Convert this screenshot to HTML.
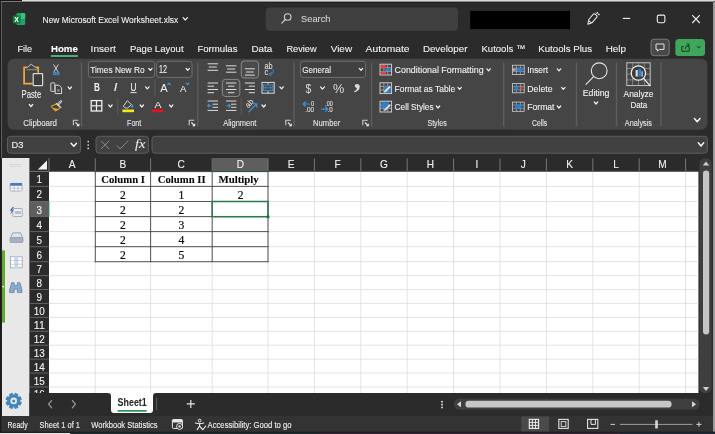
<!DOCTYPE html>
<html lang="en"><head><meta charset="utf-8"><title>New Microsoft Excel Worksheet.xlsx - Excel</title>
<style>
html,body{margin:0;padding:0;background:#2b2b2b;width:715px;height:434px;overflow:hidden}
svg text{white-space:pre}
</style></head><body>
<svg width="715" height="434" viewBox="0 0 715 434" style="display:block;will-change:transform">
<rect x="0" y="0" width="715" height="434" fill="#2b2b2b"/>
<rect x="0" y="0" width="22" height="1" fill="#151515"/>
<rect x="1" y="1" width="21" height="1" fill="#787878"/>
<rect x="22" y="0" width="693" height="1" fill="#d9d9d9"/>
<rect x="22" y="1" width="691" height="1" fill="#8c8c8c"/>
<rect x="22" y="2" width="691" height="1" fill="#202020"/>
<rect x="0" y="0" width="1" height="434" fill="#1a1a1a"/>
<rect x="1" y="2" width="1" height="156" fill="#6a6a6a" opacity="0.8"/>
<rect x="713" y="1.5" width="2" height="432" fill="#9a9a9a"/>
<rect x="0" y="431.6" width="715" height="1.4" fill="#1f1f1f"/>
<rect x="0" y="433" width="70" height="1" fill="#e8e8e8"/>
<rect x="70" y="433" width="250" height="1" fill="#1e3034"/>
<rect x="320" y="433" width="300" height="1" fill="#3a2a3e"/>
<rect x="620" y="433" width="95" height="1" fill="#1e2a3e"/>
<rect x="16.5" y="13" width="8.7" height="12" fill="#21a366" rx="1.2"/>
<rect x="20.8" y="13" width="4.4" height="6" fill="#33c481" rx="1"/>
<rect x="12.8" y="15.6" width="7.8" height="7.8" fill="#107c41" rx="1"/>
<text x="14.6" y="21.98" font-family="Liberation Sans, Arial, sans-serif" font-size="6.6" font-weight="bold" font-style="normal" fill="#ffffff" textLength="4.2" lengthAdjust="spacingAndGlyphs" stroke="#ffffff" stroke-width="0.1">X</text>
<text x="42.6" y="22.56" font-family="Liberation Sans, Arial, sans-serif" font-size="9.6" font-weight="normal" font-style="normal" fill="#f2f2f2" textLength="135.6" lengthAdjust="spacingAndGlyphs" stroke="#f2f2f2" stroke-width="0.1">New Microsoft Excel Worksheet.xlsx</text>
<path d="M183.14 17.63 L185.3 19.97 L187.46 17.63" fill="none" stroke="#f2f2f2" stroke-width="1.2" stroke-linecap="round" stroke-linejoin="round"/>
<rect x="265.8" y="7.6" width="192.2" height="23.1" fill="#404040" rx="4"/>
<circle cx="287.7" cy="17" r="3.3" fill="none" stroke="#d0d0d0" stroke-width="1.1"/>
<line x1="285.3" y1="19.5" x2="281.8" y2="23.2" stroke="#d0d0d0" stroke-width="1.1" stroke-linecap="round"/>
<text x="301" y="22.06" font-family="Liberation Sans, Arial, sans-serif" font-size="9.6" font-weight="normal" font-style="normal" fill="#d0d0d0" textLength="29.5" lengthAdjust="spacingAndGlyphs" stroke="#d0d0d0" stroke-width="0.1">Search</text>
<rect x="470.2" y="10.9" width="99.8" height="18.2" fill="#000000"/>
<g transform="rotate(-50 592.4 18.8)" fill="none" stroke="#ececec" stroke-width="1" stroke-linejoin="round">
<rect x="588.6" y="16.5" width="9" height="4.6" rx="1"/>
<path d="M588.6 16.9 l-3.2 1.9 l3.2 1.9"/>
</g>
<path d="M597.4 12.2 l0.6 1.6 M599.6 14.4 l-1.4 0.4 M596 12.8 l0.6 0.8" fill="none" stroke="#ececec" stroke-width="0.9" stroke-linecap="round"/>
<line x1="622.8" y1="18.4" x2="630.2" y2="18.4" stroke="#f0f0f0" stroke-width="1.1"/>
<rect x="657.3" y="15.1" width="7.6" height="7.6" fill="none" rx="1.6" stroke="#f0f0f0" stroke-width="1.1"/>
<path d="M692.2 15.2 L699.8 23 M699.8 15.2 L692.2 23" fill="none" stroke="#f0f0f0" stroke-width="1.1" />
<text x="17.4" y="52.03" font-family="Liberation Sans, Arial, sans-serif" font-size="9.8" font-weight="normal" font-style="normal" fill="#f2f2f2" textLength="14.5" lengthAdjust="spacingAndGlyphs" stroke="#f2f2f2" stroke-width="0.1">File</text>
<text x="51" y="52.03" font-family="Liberation Sans, Arial, sans-serif" font-size="9.8" font-weight="bold" font-style="normal" fill="#ffffff" textLength="26.8" lengthAdjust="spacingAndGlyphs" stroke="#ffffff" stroke-width="0.1">Home</text>
<rect x="50.6" y="54.9" width="27.6" height="2" fill="#4cae73" rx="1"/>
<text x="90.6" y="52.03" font-family="Liberation Sans, Arial, sans-serif" font-size="9.8" font-weight="normal" font-style="normal" fill="#f2f2f2" textLength="25.2" lengthAdjust="spacingAndGlyphs" stroke="#f2f2f2" stroke-width="0.1">Insert</text>
<text x="129.9" y="52.03" font-family="Liberation Sans, Arial, sans-serif" font-size="9.8" font-weight="normal" font-style="normal" fill="#f2f2f2" textLength="53.7" lengthAdjust="spacingAndGlyphs" stroke="#f2f2f2" stroke-width="0.1">Page Layout</text>
<text x="197.4" y="52.03" font-family="Liberation Sans, Arial, sans-serif" font-size="9.8" font-weight="normal" font-style="normal" fill="#f2f2f2" textLength="40.1" lengthAdjust="spacingAndGlyphs" stroke="#f2f2f2" stroke-width="0.1">Formulas</text>
<text x="251.5" y="52.03" font-family="Liberation Sans, Arial, sans-serif" font-size="9.8" font-weight="normal" font-style="normal" fill="#f2f2f2" textLength="20.8" lengthAdjust="spacingAndGlyphs" stroke="#f2f2f2" stroke-width="0.1">Data</text>
<text x="286.4" y="52.03" font-family="Liberation Sans, Arial, sans-serif" font-size="9.8" font-weight="normal" font-style="normal" fill="#f2f2f2" textLength="30.2" lengthAdjust="spacingAndGlyphs" stroke="#f2f2f2" stroke-width="0.1">Review</text>
<text x="330.7" y="52.03" font-family="Liberation Sans, Arial, sans-serif" font-size="9.8" font-weight="normal" font-style="normal" fill="#f2f2f2" textLength="21.4" lengthAdjust="spacingAndGlyphs" stroke="#f2f2f2" stroke-width="0.1">View</text>
<text x="365.6" y="52.03" font-family="Liberation Sans, Arial, sans-serif" font-size="9.8" font-weight="normal" font-style="normal" fill="#f2f2f2" textLength="43.9" lengthAdjust="spacingAndGlyphs" stroke="#f2f2f2" stroke-width="0.1">Automate</text>
<text x="422.9" y="52.03" font-family="Liberation Sans, Arial, sans-serif" font-size="9.8" font-weight="normal" font-style="normal" fill="#f2f2f2" textLength="44.5" lengthAdjust="spacingAndGlyphs" stroke="#f2f2f2" stroke-width="0.1">Developer</text>
<text x="481.5" y="52.03" font-family="Liberation Sans, Arial, sans-serif" font-size="9.8" font-weight="normal" font-style="normal" fill="#f2f2f2" textLength="44" lengthAdjust="spacingAndGlyphs" stroke="#f2f2f2" stroke-width="0.1">Kutools ™</text>
<text x="538.3" y="52.03" font-family="Liberation Sans, Arial, sans-serif" font-size="9.8" font-weight="normal" font-style="normal" fill="#f2f2f2" textLength="53.7" lengthAdjust="spacingAndGlyphs" stroke="#f2f2f2" stroke-width="0.1">Kutools Plus</text>
<text x="605.7" y="52.03" font-family="Liberation Sans, Arial, sans-serif" font-size="9.8" font-weight="normal" font-style="normal" fill="#f2f2f2" textLength="20.3" lengthAdjust="spacingAndGlyphs" stroke="#f2f2f2" stroke-width="0.1">Help</text>
<rect x="651" y="39.2" width="18.2" height="16.5" fill="#484848" rx="3" stroke="#7c7c7c" stroke-width="1"/>
<path d="M656 44 h8 v5.4 h-4.6 l-1.8 1.8 v-1.8 h-1.6 z" fill="none" stroke="#f0f0f0" stroke-width="0.9" stroke-linejoin="round"/>
<rect x="675.3" y="39" width="29.7" height="17" fill="#3fa75c" rx="3.5"/>
<path d="M683.6 46.6 h-1.8 v4.6 h7.4 v-4.6 h-1.6" fill="none" stroke="#10301c" stroke-width="0.9" stroke-linejoin="round"/>
<path d="M685.4 48.6 c0 -2.6 1.4 -3.8 3.6 -3.8 M687.6 43.2 l1.6 1.6 l-1.6 1.6" fill="none" stroke="#10301c" stroke-width="0.9" stroke-linecap="round" stroke-linejoin="round"/>
<path d="M697.07 46.3 L698.6 48.1 L700.13 46.3" fill="none" stroke="#10301c" stroke-width="0.9" stroke-linecap="round" stroke-linejoin="round"/>
<rect x="7.6" y="58.7" width="699.8" height="71.1" fill="#454545" rx="6"/>
<line x1="81.5" y1="62.5" x2="81.5" y2="126.4" stroke="#5e5e5e" stroke-width="1.4"/>
<line x1="197.8" y1="62.5" x2="197.8" y2="126.4" stroke="#5e5e5e" stroke-width="1.4"/>
<line x1="294" y1="62.5" x2="294" y2="126.4" stroke="#5e5e5e" stroke-width="1.4"/>
<line x1="371.6" y1="62.5" x2="371.6" y2="126.4" stroke="#5e5e5e" stroke-width="1.4"/>
<line x1="503.7" y1="62.5" x2="503.7" y2="126.4" stroke="#5e5e5e" stroke-width="1.4"/>
<line x1="576.5" y1="62.5" x2="576.5" y2="126.4" stroke="#5e5e5e" stroke-width="1.4"/>
<line x1="616.5" y1="62.5" x2="616.5" y2="126.4" stroke="#5e5e5e" stroke-width="1.4"/>
<line x1="661" y1="62.5" x2="661" y2="126.4" stroke="#5e5e5e" stroke-width="1.4"/>
<path d="M27 67.3 H24.1 V83.7 H32.6 M35.4 67.3 H38.2 V72.8" fill="none" stroke="#f2a93b" stroke-width="1.7" stroke-linejoin="miter"/>
<path d="M27 67.6 L31.2 64.2 L35.4 67.6" fill="none" stroke="#c4c4c4" stroke-width="1" stroke-linejoin="round"/>
<line x1="26.8" y1="69.7" x2="37.4" y2="69.7" stroke="#8e8e8e" stroke-width="1"/>
<rect x="33.2" y="73.6" width="9.4" height="12" fill="#3c3c3c" rx="0.5" stroke="#d8d8d8" stroke-width="1.2"/>
<text x="21.6" y="98" font-family="Liberation Sans, Arial, sans-serif" font-size="10" font-weight="normal" font-style="normal" fill="#f2f2f2" textLength="19.6" lengthAdjust="spacingAndGlyphs" stroke="#f2f2f2" stroke-width="0.1">Paste</text>
<path d="M29.29 104.51 L31 106.49 L32.71 104.51" fill="none" stroke="#f2f2f2" stroke-width="1.2" stroke-linecap="round" stroke-linejoin="round"/>
<path d="M53.7 64.8 L58 71.8 M58.2 64.8 L53.9 71.8" fill="none" stroke="#e0e0e0" stroke-width="0.9" stroke-linecap="round"/>
<circle cx="54.5" cy="73.6" r="1.25" fill="none" stroke="#3a96dd" stroke-width="1.1"/>
<circle cx="57.9" cy="73.6" r="1.25" fill="none" stroke="#3a96dd" stroke-width="1.1"/>
<rect x="50.8" y="82.9" width="4" height="8.5" fill="none" rx="0.4" stroke="#d0d0d0" stroke-width="1"/>
<path d="M55.2 85.2 h3.8 l2.6 2.6 v5.8 h-6.4 z" fill="#444" stroke="#d8d8d8" stroke-width="1" stroke-linejoin="round"/>
<rect x="57.2" y="89.2" width="2.4" height="2.4" fill="#8a8a8a"/>
<path d="M68.09 87.01 L69.8 88.99 L71.51 87.01" fill="none" stroke="#f2f2f2" stroke-width="1.2" stroke-linecap="round" stroke-linejoin="round"/>
<line x1="61" y1="101.4" x2="58.4" y2="104" stroke="#dcdcdc" stroke-width="2.4" stroke-linecap="round"/>
<line x1="61" y1="101.4" x2="58.6" y2="103.8" stroke="#454545" stroke-width="0.8" stroke-linecap="round"/>
<path d="M56.4 104 L51 106.3 L55.6 111 L60.6 107.6 Z" fill="#4a4338" stroke="#f0b040" stroke-width="1" stroke-linejoin="round"/>
<path d="M52.8 108.2 L55.6 111 L58.2 109.2 Z" fill="#f5a623" stroke="#f5a623" stroke-width="0.6" stroke-linejoin="round"/>
<line x1="56.4" y1="103.6" x2="60.8" y2="107.4" stroke="#dcdcdc" stroke-width="1.3" stroke-linecap="round"/>
<text x="23.2" y="126.29" font-family="Liberation Sans, Arial, sans-serif" font-size="8.3" font-weight="normal" font-style="normal" fill="#e6e6e6" textLength="33.8" lengthAdjust="spacingAndGlyphs" stroke="#e6e6e6" stroke-width="0.1">Clipboard</text>
<path d="M73.4 125.3 V120.3 H78.4" fill="none" stroke="#cdcdcd" stroke-width="1.1" />
<path d="M75.6 122.5 L78 124.9" fill="none" stroke="#f4f4f4" stroke-width="1.1" />
<path d="M79.4 123.3 V126.3 H76.4 Z" fill="#f4f4f4" />
<rect x="88.4" y="61.3" width="66.2" height="16.1" fill="#404040" rx="2.5" stroke="#6e6e6e" stroke-width="1"/>
<text x="90.2" y="73.08" font-family="Liberation Sans, Arial, sans-serif" font-size="9.4" font-weight="normal" font-style="normal" fill="#f2f2f2" textLength="54.4" lengthAdjust="spacingAndGlyphs" stroke="#f2f2f2" stroke-width="0.1">Times New Ro</text>
<path d="M148.69 68.41 L150.4 70.39 L152.11 68.41" fill="none" stroke="#f2f2f2" stroke-width="1.2" stroke-linecap="round" stroke-linejoin="round"/>
<rect x="156.6" y="61.3" width="35.4" height="16.1" fill="#404040" rx="2.5" stroke="#6e6e6e" stroke-width="1"/>
<text x="159" y="73.3" font-family="Liberation Sans, Arial, sans-serif" font-size="10" font-weight="normal" font-style="normal" fill="#f2f2f2" textLength="8" lengthAdjust="spacingAndGlyphs" stroke="#f2f2f2" stroke-width="0.1">12</text>
<path d="M186.09 68.41 L187.8 70.39 L189.51 68.41" fill="none" stroke="#f2f2f2" stroke-width="1.2" stroke-linecap="round" stroke-linejoin="round"/>
<text x="93.9" y="91.32" font-family="Liberation Sans, Arial, sans-serif" font-size="10.6" font-weight="bold" font-style="normal" fill="#f2f2f2" textLength="5.9" lengthAdjust="spacingAndGlyphs">B</text>
<text x="113.8" y="91.24" font-family="Liberation Sans, Arial, sans-serif" font-size="10.4" font-weight="normal" font-style="italic" fill="#f2f2f2" textLength="3.6" lengthAdjust="spacingAndGlyphs" stroke="#f2f2f2" stroke-width="0.1">I</text>
<text x="130.5" y="91.2" font-family="Liberation Sans, Arial, sans-serif" font-size="10" font-weight="normal" font-style="normal" fill="#f2f2f2" textLength="6" lengthAdjust="spacingAndGlyphs" stroke="#f2f2f2" stroke-width="0.1">U</text>
<line x1="130.4" y1="92.6" x2="136.6" y2="92.6" stroke="#e8e8e8" stroke-width="1"/>
<path d="M145.59 86.81 L147.3 88.79 L149.01 86.81" fill="none" stroke="#f2f2f2" stroke-width="1.2" stroke-linecap="round" stroke-linejoin="round"/>
<line x1="155" y1="79.5" x2="155" y2="96.5" stroke="#5c5c5c" stroke-width="1"/>
<text x="160.2" y="92.25" font-family="Liberation Sans, Arial, sans-serif" font-size="11.8" font-weight="normal" font-style="normal" fill="#f2f2f2" textLength="7.4" lengthAdjust="spacingAndGlyphs">A</text>
<path d="M167.7 84.5 l1.3 -1.4 l1.3 1.4" fill="none" stroke="#3a96dd" stroke-width="1.2" stroke-linecap="round" stroke-linejoin="round"/>
<text x="179.9" y="92.13" font-family="Liberation Sans, Arial, sans-serif" font-size="9.8" font-weight="normal" font-style="normal" fill="#f2f2f2" textLength="6.4" lengthAdjust="spacingAndGlyphs">A</text>
<path d="M186.3 83.1 l1.3 1.4 l1.3 -1.4" fill="none" stroke="#3a96dd" stroke-width="1.2" stroke-linecap="round" stroke-linejoin="round"/>
<rect x="91.2" y="100.6" width="10.6" height="10.4" fill="none" stroke="#f0f0f0" stroke-width="1.3"/>
<line x1="96.5" y1="100.6" x2="96.5" y2="111" stroke="#f0f0f0" stroke-width="1.2"/>
<line x1="91.2" y1="105.8" x2="101.8" y2="105.8" stroke="#f0f0f0" stroke-width="1.2"/>
<path d="M108.69 105.01 L110.4 106.99 L112.11 105.01" fill="none" stroke="#f2f2f2" stroke-width="1.2" stroke-linecap="round" stroke-linejoin="round"/>
<line x1="117.8" y1="98" x2="117.8" y2="115" stroke="#5c5c5c" stroke-width="1"/>
<path d="M127.4 100.6 l4 4 l-3.6 3.4 h-2.6 l-1.8 -1.8 z" fill="none" stroke="#e0e0e0" stroke-width="0.9" stroke-linejoin="round"/>
<path d="M132.4 104.2 c0.8 1.2 1.2 1.8 1.2 2.4 a1.2 1.2 0 0 1 -2.4 0 c0 -0.6 0.4 -1.2 1.2 -2.4z" fill="#3a96dd" />
<rect x="122.4" y="109.5" width="11.6" height="2.7" fill="#f5e616"/>
<path d="M140.09 105.01 L141.8 106.99 L143.51 105.01" fill="none" stroke="#f2f2f2" stroke-width="1.2" stroke-linecap="round" stroke-linejoin="round"/>
<text x="154.4" y="107.93" font-family="Liberation Sans, Arial, sans-serif" font-size="9.8" font-weight="normal" font-style="normal" fill="#f2f2f2" textLength="7" lengthAdjust="spacingAndGlyphs">A</text>
<rect x="151.9" y="109.5" width="11.6" height="2.7" fill="#e81123"/>
<path d="M169.49 105.01 L171.2 106.99 L172.91 105.01" fill="none" stroke="#f2f2f2" stroke-width="1.2" stroke-linecap="round" stroke-linejoin="round"/>
<text x="127.1" y="126.29" font-family="Liberation Sans, Arial, sans-serif" font-size="8.3" font-weight="normal" font-style="normal" fill="#e6e6e6" textLength="14.2" lengthAdjust="spacingAndGlyphs" stroke="#e6e6e6" stroke-width="0.1">Font</text>
<path d="M189.2 125.3 V120.3 H194.2" fill="none" stroke="#cdcdcd" stroke-width="1.1" />
<path d="M191.4 122.5 L193.8 124.9" fill="none" stroke="#f4f4f4" stroke-width="1.1" />
<path d="M195.2 123.3 V126.3 H192.2 Z" fill="#f4f4f4" />
<line x1="207.6" y1="63.8" x2="218" y2="63.8" stroke="#dcdcdc" stroke-width="1"/>
<line x1="208.8" y1="67" x2="216.8" y2="67" stroke="#dcdcdc" stroke-width="1"/>
<line x1="207.6" y1="70.3" x2="218" y2="70.3" stroke="#dcdcdc" stroke-width="1"/>
<line x1="226" y1="65.8" x2="236.4" y2="65.8" stroke="#dcdcdc" stroke-width="1"/>
<line x1="227.2" y1="69" x2="235.2" y2="69" stroke="#dcdcdc" stroke-width="1"/>
<line x1="226" y1="72.2" x2="236.4" y2="72.2" stroke="#dcdcdc" stroke-width="1"/>
<rect x="241.3" y="61" width="17.3" height="17" fill="#4a4a4a" rx="3" stroke="#8a8a8a" stroke-width="1"/>
<line x1="244.8" y1="68.8" x2="254.9" y2="68.8" stroke="#dcdcdc" stroke-width="1"/>
<line x1="246" y1="72" x2="253.7" y2="72" stroke="#dcdcdc" stroke-width="1"/>
<line x1="244.8" y1="75.1" x2="254.9" y2="75.1" stroke="#dcdcdc" stroke-width="1"/>
<text x="264.4" y="69.36" font-family="Liberation Sans, Arial, sans-serif" font-size="8.2" font-weight="normal" font-style="normal" fill="#dcdcdc" textLength="8.2" lengthAdjust="spacingAndGlyphs" stroke="#dcdcdc" stroke-width="0.1">ab</text>
<text x="264.6" y="75.46" font-family="Liberation Sans, Arial, sans-serif" font-size="8.2" font-weight="normal" font-style="normal" fill="#dcdcdc" textLength="3.8" lengthAdjust="spacingAndGlyphs" stroke="#dcdcdc" stroke-width="0.1">c</text>
<path d="M273 69.6 c1.2 2.6 0 4.6 -3.4 4.6 M271.2 72.4 l-1.8 1.8 l1.8 1.8" fill="none" stroke="#3a96dd" stroke-width="0.9" stroke-linecap="round" stroke-linejoin="round"/>
<line x1="207.6" y1="83" x2="218" y2="83" stroke="#dcdcdc" stroke-width="1"/>
<line x1="207.6" y1="86.2" x2="214" y2="86.2" stroke="#dcdcdc" stroke-width="1"/>
<line x1="207.6" y1="89.5" x2="218" y2="89.5" stroke="#dcdcdc" stroke-width="1"/>
<line x1="207.6" y1="92.7" x2="214" y2="92.7" stroke="#dcdcdc" stroke-width="1"/>
<rect x="222.4" y="79.4" width="17.4" height="17.1" fill="#4a4a4a" rx="3" stroke="#8a8a8a" stroke-width="1"/>
<line x1="226" y1="83" x2="236.4" y2="83" stroke="#dcdcdc" stroke-width="1"/>
<line x1="228" y1="86.2" x2="234.4" y2="86.2" stroke="#dcdcdc" stroke-width="1"/>
<line x1="226" y1="89.5" x2="236.4" y2="89.5" stroke="#dcdcdc" stroke-width="1"/>
<line x1="228" y1="92.7" x2="234.4" y2="92.7" stroke="#dcdcdc" stroke-width="1"/>
<line x1="244.8" y1="83" x2="254.9" y2="83" stroke="#dcdcdc" stroke-width="1"/>
<line x1="248.8" y1="86.2" x2="254.9" y2="86.2" stroke="#dcdcdc" stroke-width="1"/>
<line x1="244.8" y1="89.5" x2="254.9" y2="89.5" stroke="#dcdcdc" stroke-width="1"/>
<line x1="248.8" y1="92.7" x2="254.9" y2="92.7" stroke="#dcdcdc" stroke-width="1"/>
<rect x="262" y="82.4" width="12.2" height="10.8" fill="none" stroke="#dcdcdc" stroke-width="1"/>
<line x1="268.1" y1="82.4" x2="268.1" y2="84.6" stroke="#dcdcdc" stroke-width="0.9"/>
<line x1="268.1" y1="91" x2="268.1" y2="93.2" stroke="#dcdcdc" stroke-width="0.9"/>
<rect x="263.4" y="85" width="9.4" height="5.6" fill="none" stroke="#3a96dd" stroke-width="0.9"/>
<line x1="264.6" y1="87.8" x2="271.6" y2="87.8" stroke="#3a96dd" stroke-width="0.9"/>
<path d="M266 86.4 l-1.4 1.4 l1.4 1.4 M270.2 86.4 l1.4 1.4 l-1.4 1.4" fill="none" stroke="#3a96dd" stroke-width="0.8" />
<path d="M279.89 86.81 L281.6 88.79 L283.31 86.81" fill="none" stroke="#f2f2f2" stroke-width="1.2" stroke-linecap="round" stroke-linejoin="round"/>
<line x1="207.6" y1="101" x2="218" y2="101" stroke="#dcdcdc" stroke-width="1"/>
<line x1="212.6" y1="104.2" x2="218" y2="104.2" stroke="#dcdcdc" stroke-width="1"/>
<line x1="212.6" y1="107.3" x2="218" y2="107.3" stroke="#dcdcdc" stroke-width="1"/>
<line x1="207.6" y1="110.4" x2="218" y2="110.4" stroke="#dcdcdc" stroke-width="1"/>
<path d="M211.8 105.7 h-4 M209.4 104 l-1.7 1.7 l1.7 1.7" fill="none" stroke="#3a96dd" stroke-width="1.1" />
<line x1="226" y1="101" x2="236.4" y2="101" stroke="#dcdcdc" stroke-width="1"/>
<line x1="231" y1="104.2" x2="236.4" y2="104.2" stroke="#dcdcdc" stroke-width="1"/>
<line x1="231" y1="107.3" x2="236.4" y2="107.3" stroke="#dcdcdc" stroke-width="1"/>
<line x1="226" y1="110.4" x2="236.4" y2="110.4" stroke="#dcdcdc" stroke-width="1"/>
<path d="M226.2 105.7 h4 M228.6 104 l1.7 1.7 l-1.7 1.7" fill="none" stroke="#3a96dd" stroke-width="1.1" />
<line x1="241.2" y1="98" x2="241.2" y2="115" stroke="#5c5c5c" stroke-width="1"/>
<g transform="rotate(-45 249.5 103.6)">
<text x="245.2" y="106.06" font-family="Liberation Sans, Arial, sans-serif" font-size="8.2" font-weight="normal" font-style="normal" fill="#dcdcdc" textLength="8.6" lengthAdjust="spacingAndGlyphs" stroke="#dcdcdc" stroke-width="0.1">ab</text>
</g>
<path d="M248.8 111.8 L256.4 104.2 M253.4 103.8 h3.4 v3.4" fill="none" stroke="#3a96dd" stroke-width="1.1" stroke-linecap="round" stroke-linejoin="round"/>
<path d="M261.99 105.01 L263.7 106.99 L265.41 105.01" fill="none" stroke="#f2f2f2" stroke-width="1.2" stroke-linecap="round" stroke-linejoin="round"/>
<text x="223.2" y="126.29" font-family="Liberation Sans, Arial, sans-serif" font-size="8.3" font-weight="normal" font-style="normal" fill="#e6e6e6" textLength="33.2" lengthAdjust="spacingAndGlyphs" stroke="#e6e6e6" stroke-width="0.1">Alignment</text>
<path d="M285.8 125.3 V120.3 H290.8" fill="none" stroke="#cdcdcd" stroke-width="1.1" />
<path d="M288 122.5 L290.4 124.9" fill="none" stroke="#f4f4f4" stroke-width="1.1" />
<path d="M291.8 123.3 V126.3 H288.8 Z" fill="#f4f4f4" />
<rect x="300.4" y="61.3" width="65.2" height="16.1" fill="#404040" rx="2.5" stroke="#6e6e6e" stroke-width="1"/>
<text x="302.2" y="73.08" font-family="Liberation Sans, Arial, sans-serif" font-size="9.4" font-weight="normal" font-style="normal" fill="#f2f2f2" textLength="28.8" lengthAdjust="spacingAndGlyphs" stroke="#f2f2f2" stroke-width="0.1">General</text>
<path d="M359.29 68.41 L361 70.39 L362.71 68.41" fill="none" stroke="#f2f2f2" stroke-width="1.2" stroke-linecap="round" stroke-linejoin="round"/>
<text x="305.4" y="92.74" font-family="Liberation Sans, Arial, sans-serif" font-size="12.6" font-weight="normal" font-style="normal" fill="#dcdcdc" textLength="5.8" lengthAdjust="spacingAndGlyphs">$</text>
<path d="M320.52 86.92 L322.5 89.08 L324.48 86.92" fill="none" stroke="#f2f2f2" stroke-width="1.2" stroke-linecap="round" stroke-linejoin="round"/>
<text x="332.9" y="92.75" font-family="Liberation Sans, Arial, sans-serif" font-size="13.2" font-weight="normal" font-style="normal" fill="#dcdcdc" textLength="11.3" lengthAdjust="spacingAndGlyphs">%</text>
<text x="353.8" y="88" font-family="Liberation Serif, Times New Roman, serif" font-size="28" font-weight="bold" font-style="normal" fill="#dcdcdc" textLength="7" lengthAdjust="spacingAndGlyphs">,</text>
<text x="311" y="106.06" font-family="Liberation Sans, Arial, sans-serif" font-size="7.4" font-weight="normal" font-style="normal" fill="#dcdcdc" textLength="3.2" lengthAdjust="spacingAndGlyphs" stroke="#dcdcdc" stroke-width="0.15">0</text>
<text x="305.2" y="112.06" font-family="Liberation Sans, Arial, sans-serif" font-size="7.4" font-weight="normal" font-style="normal" fill="#dcdcdc" textLength="9" lengthAdjust="spacingAndGlyphs" stroke="#dcdcdc" stroke-width="0.15">.00</text>
<path d="M309.4 104 h-6 M305.4 101.8 l-2.2 2.2 l2.2 2.2" fill="none" stroke="#3a96dd" stroke-width="1.2" stroke-linecap="round" stroke-linejoin="round"/>
<text x="325.3" y="106.06" font-family="Liberation Sans, Arial, sans-serif" font-size="7.4" font-weight="normal" font-style="normal" fill="#dcdcdc" textLength="7.5" lengthAdjust="spacingAndGlyphs" stroke="#dcdcdc" stroke-width="0.15">.00</text>
<text x="327.6" y="112.06" font-family="Liberation Sans, Arial, sans-serif" font-size="7.4" font-weight="normal" font-style="normal" fill="#dcdcdc" textLength="5.2" lengthAdjust="spacingAndGlyphs" stroke="#dcdcdc" stroke-width="0.15">.0</text>
<path d="M321.6 109.2 h6 M325.6 107 l2.2 2.2 l-2.2 2.2" fill="none" stroke="#3a96dd" stroke-width="1.2" stroke-linecap="round" stroke-linejoin="round"/>
<text x="313" y="126.29" font-family="Liberation Sans, Arial, sans-serif" font-size="8.3" font-weight="normal" font-style="normal" fill="#e6e6e6" textLength="27.3" lengthAdjust="spacingAndGlyphs" stroke="#e6e6e6" stroke-width="0.1">Number</text>
<path d="M362.8 125.3 V120.3 H367.8" fill="none" stroke="#cdcdcd" stroke-width="1.1" />
<path d="M365 122.5 L367.4 124.9" fill="none" stroke="#f4f4f4" stroke-width="1.1" />
<path d="M368.8 123.3 V126.3 H365.8 Z" fill="#f4f4f4" />
<rect x="380" y="64.2" width="11.6" height="10.8" fill="none" stroke="#d8d8d8" stroke-width="0.9"/>
<line x1="383.87" y1="64.2" x2="383.87" y2="75" stroke="#bdbdbd" stroke-width="0.7"/>
<line x1="380" y1="67.8" x2="391.6" y2="67.8" stroke="#bdbdbd" stroke-width="0.7"/>
<line x1="387.73" y1="64.2" x2="387.73" y2="75" stroke="#bdbdbd" stroke-width="0.7"/>
<line x1="380" y1="71.4" x2="391.6" y2="71.4" stroke="#bdbdbd" stroke-width="0.7"/>
<rect x="381" y="65" width="5" height="3" fill="#e8413a"/>
<rect x="385" y="68.4" width="6" height="2.8" fill="#2b7fd4"/>
<rect x="381" y="71.4" width="5" height="3" fill="#e8413a"/>
<text x="394.6" y="73.01" font-family="Liberation Sans, Arial, sans-serif" font-size="9.2" font-weight="normal" font-style="normal" fill="#f2f2f2" textLength="89" lengthAdjust="spacingAndGlyphs" stroke="#f2f2f2" stroke-width="0.1">Conditional Formatting</text>
<path d="M486.89 68.81 L488.6 70.79 L490.31 68.81" fill="none" stroke="#f2f2f2" stroke-width="1.2" stroke-linecap="round" stroke-linejoin="round"/>
<rect x="380" y="82.8" width="11.6" height="10.8" fill="none" stroke="#d8d8d8" stroke-width="0.9"/>
<line x1="383.87" y1="82.8" x2="383.87" y2="93.6" stroke="#bdbdbd" stroke-width="0.7"/>
<line x1="380" y1="86.4" x2="391.6" y2="86.4" stroke="#bdbdbd" stroke-width="0.7"/>
<line x1="387.73" y1="82.8" x2="387.73" y2="93.6" stroke="#bdbdbd" stroke-width="0.7"/>
<line x1="380" y1="90" x2="391.6" y2="90" stroke="#bdbdbd" stroke-width="0.7"/>
<rect x="383.8" y="86.2" width="7.2" height="6.8" fill="#2b7fd4"/>
<path d="M383.4 93.2 l1 -2.6 l5 -5 l1.6 1.6 l-5 5 z" fill="#e6e6e6" stroke="#555" stroke-width="0.4" />
<text x="394.6" y="91.61" font-family="Liberation Sans, Arial, sans-serif" font-size="9.2" font-weight="normal" font-style="normal" fill="#f2f2f2" textLength="60.6" lengthAdjust="spacingAndGlyphs" stroke="#f2f2f2" stroke-width="0.1">Format as Table</text>
<path d="M457.89 87.41 L459.6 89.39 L461.31 87.41" fill="none" stroke="#f2f2f2" stroke-width="1.2" stroke-linecap="round" stroke-linejoin="round"/>
<rect x="380" y="101.2" width="11.6" height="10.8" fill="none" stroke="#d8d8d8" stroke-width="0.9"/>
<line x1="383.87" y1="101.2" x2="383.87" y2="112" stroke="#bdbdbd" stroke-width="0.7"/>
<line x1="380" y1="104.8" x2="391.6" y2="104.8" stroke="#bdbdbd" stroke-width="0.7"/>
<line x1="387.73" y1="101.2" x2="387.73" y2="112" stroke="#bdbdbd" stroke-width="0.7"/>
<line x1="380" y1="108.4" x2="391.6" y2="108.4" stroke="#bdbdbd" stroke-width="0.7"/>
<rect x="381.2" y="102.4" width="7.4" height="6" fill="#2b7fd4"/>
<path d="M383.4 111.6 l1 -2.6 l5 -5 l1.6 1.6 l-5 5 z" fill="#e6e6e6" stroke="#555" stroke-width="0.4" />
<text x="394.6" y="110.21" font-family="Liberation Sans, Arial, sans-serif" font-size="9.2" font-weight="normal" font-style="normal" fill="#f2f2f2" textLength="39" lengthAdjust="spacingAndGlyphs" stroke="#f2f2f2" stroke-width="0.1">Cell Styles</text>
<path d="M436.29 106.01 L438 107.99 L439.71 106.01" fill="none" stroke="#f2f2f2" stroke-width="1.2" stroke-linecap="round" stroke-linejoin="round"/>
<text x="427.4" y="126.29" font-family="Liberation Sans, Arial, sans-serif" font-size="8.3" font-weight="normal" font-style="normal" fill="#e6e6e6" textLength="19.4" lengthAdjust="spacingAndGlyphs" stroke="#e6e6e6" stroke-width="0.1">Styles</text>
<rect x="512.6" y="65.2" width="11.6" height="9.2" fill="none" stroke="#d0d0d0" stroke-width="0.8"/>
<line x1="512.6" y1="68.2" x2="524.2" y2="68.2" stroke="#bdbdbd" stroke-width="0.6"/>
<line x1="512.6" y1="71.4" x2="524.2" y2="71.4" stroke="#bdbdbd" stroke-width="0.6"/>
<line x1="516.4" y1="65.2" x2="516.4" y2="74.4" stroke="#bdbdbd" stroke-width="0.6"/>
<line x1="520.4" y1="65.2" x2="520.4" y2="74.4" stroke="#bdbdbd" stroke-width="0.6"/>
<rect x="517" y="68" width="5.8" height="3.6" fill="#2b7fd4"/>
<path d="M513 69.8 h3.4 M514.4 68.4 l-1.4 1.4 l1.4 1.4" fill="none" stroke="#e6e6e6" stroke-width="0.8" />
<text x="527.3" y="73.11" font-family="Liberation Sans, Arial, sans-serif" font-size="9.2" font-weight="normal" font-style="normal" fill="#f2f2f2" textLength="20.7" lengthAdjust="spacingAndGlyphs" stroke="#f2f2f2" stroke-width="0.1">Insert</text>
<path d="M557.29 68.81 L559 70.79 L560.71 68.81" fill="none" stroke="#f2f2f2" stroke-width="1.2" stroke-linecap="round" stroke-linejoin="round"/>
<rect x="512.6" y="83.6" width="11.6" height="9.2" fill="none" stroke="#d0d0d0" stroke-width="0.8"/>
<line x1="512.6" y1="86.6" x2="524.2" y2="86.6" stroke="#bdbdbd" stroke-width="0.6"/>
<line x1="512.6" y1="89.8" x2="524.2" y2="89.8" stroke="#bdbdbd" stroke-width="0.6"/>
<line x1="516.4" y1="83.6" x2="516.4" y2="92.8" stroke="#bdbdbd" stroke-width="0.6"/>
<line x1="520.4" y1="83.6" x2="520.4" y2="92.8" stroke="#bdbdbd" stroke-width="0.6"/>
<rect x="514.2" y="86.4" width="4" height="3.6" fill="#2b7fd4"/>
<path d="M520 86.7 l3 3 M523 86.7 l-3 3" fill="none" stroke="#e8413a" stroke-width="1" />
<text x="527.3" y="91.51" font-family="Liberation Sans, Arial, sans-serif" font-size="9.2" font-weight="normal" font-style="normal" fill="#f2f2f2" textLength="25.2" lengthAdjust="spacingAndGlyphs" stroke="#f2f2f2" stroke-width="0.1">Delete</text>
<path d="M561.59 87.41 L563.3 89.39 L565.01 87.41" fill="none" stroke="#f2f2f2" stroke-width="1.2" stroke-linecap="round" stroke-linejoin="round"/>
<rect x="512.6" y="102.1" width="11.6" height="9.2" fill="none" stroke="#d0d0d0" stroke-width="0.8"/>
<line x1="512.6" y1="105.1" x2="524.2" y2="105.1" stroke="#bdbdbd" stroke-width="0.6"/>
<line x1="512.6" y1="108.3" x2="524.2" y2="108.3" stroke="#bdbdbd" stroke-width="0.6"/>
<line x1="516.4" y1="102.1" x2="516.4" y2="111.3" stroke="#bdbdbd" stroke-width="0.6"/>
<line x1="520.4" y1="102.1" x2="520.4" y2="111.3" stroke="#bdbdbd" stroke-width="0.6"/>
<rect x="515.2" y="104.7" width="6.4" height="4" fill="#2b7fd4"/>
<text x="527.3" y="110.01" font-family="Liberation Sans, Arial, sans-serif" font-size="9.2" font-weight="normal" font-style="normal" fill="#f2f2f2" textLength="27.1" lengthAdjust="spacingAndGlyphs" stroke="#f2f2f2" stroke-width="0.1">Format</text>
<path d="M557.29 106.01 L559 107.99 L560.71 106.01" fill="none" stroke="#f2f2f2" stroke-width="1.2" stroke-linecap="round" stroke-linejoin="round"/>
<text x="532" y="126.29" font-family="Liberation Sans, Arial, sans-serif" font-size="8.3" font-weight="normal" font-style="normal" fill="#e6e6e6" textLength="15.3" lengthAdjust="spacingAndGlyphs" stroke="#e6e6e6" stroke-width="0.1">Cells</text>
<circle cx="599.2" cy="70.8" r="7.9" fill="none" stroke="#e4e4e4" stroke-width="1.1"/>
<line x1="593.6" y1="76.6" x2="586" y2="84.4" stroke="#e4e4e4" stroke-width="1.1" stroke-linecap="round"/>
<text x="582.7" y="95.81" font-family="Liberation Sans, Arial, sans-serif" font-size="9.2" font-weight="normal" font-style="normal" fill="#f2f2f2" textLength="26.8" lengthAdjust="spacingAndGlyphs" stroke="#f2f2f2" stroke-width="0.1">Editing</text>
<path d="M594.29 102.01 L596 103.99 L597.71 102.01" fill="none" stroke="#f2f2f2" stroke-width="1.2" stroke-linecap="round" stroke-linejoin="round"/>
<rect x="626.8" y="62.8" width="23.4" height="22.8" fill="none" stroke="#d0d0d0" stroke-width="0.9"/>
<line x1="632.65" y1="62.8" x2="632.65" y2="85.6" stroke="#a8a8a8" stroke-width="0.6"/>
<line x1="626.8" y1="68.5" x2="650.2" y2="68.5" stroke="#a8a8a8" stroke-width="0.6"/>
<line x1="638.5" y1="62.8" x2="638.5" y2="85.6" stroke="#a8a8a8" stroke-width="0.6"/>
<line x1="626.8" y1="74.2" x2="650.2" y2="74.2" stroke="#a8a8a8" stroke-width="0.6"/>
<line x1="644.35" y1="62.8" x2="644.35" y2="85.6" stroke="#a8a8a8" stroke-width="0.6"/>
<line x1="626.8" y1="79.9" x2="650.2" y2="79.9" stroke="#a8a8a8" stroke-width="0.6"/>
<circle cx="638.4" cy="73" r="7.2" fill="#3a3a3a" stroke="#ececec" stroke-width="1.3"/>
<rect x="635.6" y="70" width="2.2" height="6.6" fill="#d8d8d8"/>
<rect x="638.4" y="68.8" width="2.6" height="7.8" fill="#2b7fd4"/>
<rect x="641.4" y="71.2" width="1.4" height="5.4" fill="#9cc7f0"/>
<line x1="643.8" y1="78.6" x2="650" y2="85.6" stroke="#ececec" stroke-width="1.3" stroke-linecap="round"/>
<text x="623.6" y="97.31" font-family="Liberation Sans, Arial, sans-serif" font-size="9.2" font-weight="normal" font-style="normal" fill="#f2f2f2" textLength="29.9" lengthAdjust="spacingAndGlyphs" stroke="#f2f2f2" stroke-width="0.1">Analyze</text>
<text x="630.4" y="108.11" font-family="Liberation Sans, Arial, sans-serif" font-size="9.2" font-weight="normal" font-style="normal" fill="#f2f2f2" textLength="16.9" lengthAdjust="spacingAndGlyphs" stroke="#f2f2f2" stroke-width="0.1">Data</text>
<text x="624.8" y="126.29" font-family="Liberation Sans, Arial, sans-serif" font-size="8.3" font-weight="normal" font-style="normal" fill="#e6e6e6" textLength="27.2" lengthAdjust="spacingAndGlyphs" stroke="#e6e6e6" stroke-width="0.1">Analysis</text>
<path d="M694.41 118.58 L697.2 121.82 L699.99 118.58" fill="none" stroke="#f4f4f4" stroke-width="1.5" stroke-linecap="round" stroke-linejoin="round"/>
<rect x="7.4" y="136.3" width="73.2" height="16.9" fill="#414141" rx="3" stroke="#5e5e5e" stroke-width="1"/>
<text x="11.5" y="148.45" font-family="Liberation Sans, Arial, sans-serif" font-size="9.3" font-weight="normal" font-style="normal" fill="#f2f2f2" textLength="11.9" lengthAdjust="spacingAndGlyphs" stroke="#f2f2f2" stroke-width="0.1">D3</text>
<path d="M71.1 143.27 L73.8 146.33 L76.5 143.27" fill="none" stroke="#f4f4f4" stroke-width="1.5" stroke-linecap="round" stroke-linejoin="round"/>
<circle cx="88.2" cy="141.6" r="0.85" fill="#e0e0e0"/>
<circle cx="88.2" cy="145" r="0.85" fill="#e0e0e0"/>
<circle cx="88.2" cy="148.4" r="0.85" fill="#e0e0e0"/>
<rect x="96" y="136.3" width="52.6" height="16.9" fill="#414141" rx="3" stroke="#5e5e5e" stroke-width="1"/>
<path d="M101 140.8 l8.2 8.2 M109.2 140.8 l-8.2 8.2" fill="none" stroke="#8a8a8a" stroke-width="1" />
<path d="M116.8 145.4 l3.4 3.6 l8 -8.4" fill="none" stroke="#8a8a8a" stroke-width="1" />
<text x="135" y="148.36" font-family="Liberation Serif, Times New Roman, serif" font-size="12" font-weight="normal" font-style="italic" fill="#e6e6e6" textLength="10.4" lengthAdjust="spacingAndGlyphs" stroke="#e6e6e6" stroke-width="0.1">fx</text>
<rect x="152" y="136.3" width="555.4" height="16.9" fill="#414141" rx="3" stroke="#5e5e5e" stroke-width="1"/>
<path d="M698.3 142.87 L701 145.93 L703.7 142.87" fill="none" stroke="#f4f4f4" stroke-width="1.5" stroke-linecap="round" stroke-linejoin="round"/>
<rect x="2" y="158" width="27.4" height="258" fill="#e8e8e8"/>
<rect x="0" y="158" width="1.4" height="274" fill="#1a1a1a"/>
<line x1="9.2" y1="164.4" x2="21.4" y2="164.4" stroke="#d2d2d2" stroke-width="0.8"/>
<line x1="9.2" y1="166.4" x2="21.4" y2="166.4" stroke="#d2d2d2" stroke-width="0.8"/>
<rect x="2" y="250.4" width="3" height="72.2" fill="#62a82a"/>
<circle cx="3.2" cy="286.6" r="0.9" fill="#ffffff"/>
<rect x="10.2" y="183.4" width="11.8" height="7.6" fill="#ffffff" rx="0.6" stroke="#9aa6b8" stroke-width="0.8"/>
<rect x="10.2" y="183" width="11.8" height="2.8" fill="#4a7cc0"/>
<line x1="10.2" y1="188.2" x2="22" y2="188.2" stroke="#9aa6b8" stroke-width="0.6"/>
<line x1="14.2" y1="185.8" x2="14.2" y2="191" stroke="#9aa6b8" stroke-width="0.6"/>
<line x1="18" y1="185.8" x2="18" y2="191" stroke="#9aa6b8" stroke-width="0.6"/>
<rect x="12.8" y="208.6" width="9.4" height="7.8" fill="#f4f4f4" rx="0.6" stroke="#8c96a8" stroke-width="0.8"/>
<rect x="14.8" y="211" width="6" height="3.2" fill="#b8bec8"/>
<path d="M12.6 207 l-2.8 3.8 h2 l-1.8 4 l4 -5 h-2 l2 -2.8z" fill="#2d6cc0" />
<path d="M10.6 238 l2.2 -5.2 h7.8 l2 5.2 z" fill="#dfe3ea" stroke="#7f8aa0" stroke-width="0.7" />
<rect x="10" y="237.8" width="13" height="4.6" fill="#aab2c2" rx="0.8" stroke="#7f8aa0" stroke-width="0.6"/>
<rect x="10.4" y="256.8" width="11.8" height="11" fill="#ffffff" stroke="#9aa6b8" stroke-width="0.8"/>
<rect x="14.4" y="256.8" width="3.8" height="11" fill="#c6daf2"/>
<line x1="10.4" y1="260.4" x2="22.2" y2="260.4" stroke="#9aa6b8" stroke-width="0.5"/>
<line x1="10.4" y1="264.2" x2="22.2" y2="264.2" stroke="#9aa6b8" stroke-width="0.5"/>
<path d="M9.6 290 l2 -7.4 h2.4 l0.8 3 h2 l0.8 -3 h2.4 l2 7.4 v2.6 h-4.6 v-3.4 h-3.2 v3.4 h-4.6 z" fill="#8ea8ca" stroke="#5b7fae" stroke-width="0.7" />
<circle cx="13.7" cy="400.9" r="6.3" fill="#4386bb"/>
<rect x="11.7" y="392.8" width="4" height="16.2" rx="0.8" fill="#4386bb" transform="rotate(22.5 13.7 400.9)"/>
<rect x="11.7" y="392.8" width="4" height="16.2" rx="0.8" fill="#4386bb" transform="rotate(67.5 13.7 400.9)"/>
<rect x="11.7" y="392.8" width="4" height="16.2" rx="0.8" fill="#4386bb" transform="rotate(112.5 13.7 400.9)"/>
<rect x="11.7" y="392.8" width="4" height="16.2" rx="0.8" fill="#4386bb" transform="rotate(157.5 13.7 400.9)"/>
<circle cx="13.7" cy="400.9" r="3.3" fill="#e8e8e8"/>
<circle cx="13.7" cy="400.9" r="1.5" fill="#4386bb"/>
<rect x="49" y="171.5" width="649.4" height="221.5" fill="#ffffff"/>
<line x1="95.3" y1="171.5" x2="95.3" y2="393" stroke="#d9d9d9" stroke-width="0.7"/>
<line x1="150.6" y1="171.5" x2="150.6" y2="393" stroke="#d9d9d9" stroke-width="0.7"/>
<line x1="212.2" y1="171.5" x2="212.2" y2="393" stroke="#d9d9d9" stroke-width="0.7"/>
<line x1="268" y1="171.5" x2="268" y2="393" stroke="#d9d9d9" stroke-width="0.7"/>
<line x1="314.4" y1="171.5" x2="314.4" y2="393" stroke="#d9d9d9" stroke-width="0.7"/>
<line x1="360.8" y1="171.5" x2="360.8" y2="393" stroke="#d9d9d9" stroke-width="0.7"/>
<line x1="407.2" y1="171.5" x2="407.2" y2="393" stroke="#d9d9d9" stroke-width="0.7"/>
<line x1="453.6" y1="171.5" x2="453.6" y2="393" stroke="#d9d9d9" stroke-width="0.7"/>
<line x1="500" y1="171.5" x2="500" y2="393" stroke="#d9d9d9" stroke-width="0.7"/>
<line x1="546.4" y1="171.5" x2="546.4" y2="393" stroke="#d9d9d9" stroke-width="0.7"/>
<line x1="592.8" y1="171.5" x2="592.8" y2="393" stroke="#d9d9d9" stroke-width="0.7"/>
<line x1="639.2" y1="171.5" x2="639.2" y2="393" stroke="#d9d9d9" stroke-width="0.7"/>
<line x1="685.6" y1="171.5" x2="685.6" y2="393" stroke="#d9d9d9" stroke-width="0.7"/>
<line x1="49" y1="186.4" x2="698.4" y2="186.4" stroke="#d9d9d9" stroke-width="0.7"/>
<line x1="49" y1="201.5" x2="698.4" y2="201.5" stroke="#d9d9d9" stroke-width="0.7"/>
<line x1="49" y1="216.6" x2="698.4" y2="216.6" stroke="#d9d9d9" stroke-width="0.7"/>
<line x1="49" y1="231.6" x2="698.4" y2="231.6" stroke="#d9d9d9" stroke-width="0.7"/>
<line x1="49" y1="246.7" x2="698.4" y2="246.7" stroke="#d9d9d9" stroke-width="0.7"/>
<line x1="49" y1="261.7" x2="698.4" y2="261.7" stroke="#d9d9d9" stroke-width="0.7"/>
<line x1="49" y1="275.62" x2="698.4" y2="275.62" stroke="#d9d9d9" stroke-width="0.7"/>
<line x1="49" y1="289.54" x2="698.4" y2="289.54" stroke="#d9d9d9" stroke-width="0.7"/>
<line x1="49" y1="303.46" x2="698.4" y2="303.46" stroke="#d9d9d9" stroke-width="0.7"/>
<line x1="49" y1="317.38" x2="698.4" y2="317.38" stroke="#d9d9d9" stroke-width="0.7"/>
<line x1="49" y1="331.3" x2="698.4" y2="331.3" stroke="#d9d9d9" stroke-width="0.7"/>
<line x1="49" y1="345.22" x2="698.4" y2="345.22" stroke="#d9d9d9" stroke-width="0.7"/>
<line x1="49" y1="359.14" x2="698.4" y2="359.14" stroke="#d9d9d9" stroke-width="0.7"/>
<line x1="49" y1="373.06" x2="698.4" y2="373.06" stroke="#d9d9d9" stroke-width="0.7"/>
<line x1="49" y1="386.98" x2="698.4" y2="386.98" stroke="#d9d9d9" stroke-width="0.7"/>
<rect x="212.6" y="158" width="55.4" height="13" fill="#5e5e5e"/>
<line x1="212.2" y1="171.2" x2="268.4" y2="171.2" stroke="#2f8a55" stroke-width="1.2"/>
<line x1="49" y1="158" x2="49" y2="171.6" stroke="#767676" stroke-width="1"/>
<line x1="95.3" y1="158.4" x2="95.3" y2="171.4" stroke="#767676" stroke-width="1"/>
<line x1="150.6" y1="158.4" x2="150.6" y2="171.4" stroke="#767676" stroke-width="1"/>
<line x1="212.2" y1="158.4" x2="212.2" y2="171.4" stroke="#767676" stroke-width="1"/>
<line x1="268" y1="158.4" x2="268" y2="171.4" stroke="#767676" stroke-width="1"/>
<line x1="314.4" y1="158.4" x2="314.4" y2="171.4" stroke="#767676" stroke-width="1"/>
<line x1="360.8" y1="158.4" x2="360.8" y2="171.4" stroke="#767676" stroke-width="1"/>
<line x1="407.2" y1="158.4" x2="407.2" y2="171.4" stroke="#767676" stroke-width="1"/>
<line x1="453.6" y1="158.4" x2="453.6" y2="171.4" stroke="#767676" stroke-width="1"/>
<line x1="500" y1="158.4" x2="500" y2="171.4" stroke="#767676" stroke-width="1"/>
<line x1="546.4" y1="158.4" x2="546.4" y2="171.4" stroke="#767676" stroke-width="1"/>
<line x1="592.8" y1="158.4" x2="592.8" y2="171.4" stroke="#767676" stroke-width="1"/>
<line x1="639.2" y1="158.4" x2="639.2" y2="171.4" stroke="#767676" stroke-width="1"/>
<line x1="685.6" y1="158.4" x2="685.6" y2="171.4" stroke="#767676" stroke-width="1"/>
<line x1="30" y1="171.4" x2="49" y2="171.4" stroke="#767676" stroke-width="1"/>
<line x1="49" y1="171.3" x2="698.4" y2="171.3" stroke="#4a4a4a" stroke-width="0.8"/>
<path d="M37.8 169.6 H47 V160.4 Z" fill="#f2f2f2" />
<rect x="29.4" y="201.2" width="19.2" height="15.2" fill="#5e5e5e"/>
<line x1="48.8" y1="201" x2="48.8" y2="216.8" stroke="#2f8a55" stroke-width="1.2"/>
<line x1="29.6" y1="186.4" x2="48.8" y2="186.4" stroke="#6a6a6a" stroke-width="0.9"/>
<line x1="29.6" y1="201.5" x2="48.8" y2="201.5" stroke="#6a6a6a" stroke-width="0.9"/>
<line x1="29.6" y1="216.6" x2="48.8" y2="216.6" stroke="#6a6a6a" stroke-width="0.9"/>
<line x1="29.6" y1="231.6" x2="48.8" y2="231.6" stroke="#6a6a6a" stroke-width="0.9"/>
<line x1="29.6" y1="246.7" x2="48.8" y2="246.7" stroke="#6a6a6a" stroke-width="0.9"/>
<line x1="29.6" y1="261.7" x2="48.8" y2="261.7" stroke="#6a6a6a" stroke-width="0.9"/>
<line x1="29.6" y1="275.62" x2="48.8" y2="275.62" stroke="#6a6a6a" stroke-width="0.9"/>
<line x1="29.6" y1="289.54" x2="48.8" y2="289.54" stroke="#6a6a6a" stroke-width="0.9"/>
<line x1="29.6" y1="303.46" x2="48.8" y2="303.46" stroke="#6a6a6a" stroke-width="0.9"/>
<line x1="29.6" y1="317.38" x2="48.8" y2="317.38" stroke="#6a6a6a" stroke-width="0.9"/>
<line x1="29.6" y1="331.3" x2="48.8" y2="331.3" stroke="#6a6a6a" stroke-width="0.9"/>
<line x1="29.6" y1="345.22" x2="48.8" y2="345.22" stroke="#6a6a6a" stroke-width="0.9"/>
<line x1="29.6" y1="359.14" x2="48.8" y2="359.14" stroke="#6a6a6a" stroke-width="0.9"/>
<line x1="29.6" y1="373.06" x2="48.8" y2="373.06" stroke="#6a6a6a" stroke-width="0.9"/>
<line x1="29.6" y1="386.98" x2="48.8" y2="386.98" stroke="#6a6a6a" stroke-width="0.9"/>
<text x="72.2" y="168.24" font-family="Liberation Sans, Arial, sans-serif" font-size="10.1" font-weight="normal" font-style="normal" fill="#f2f2f2" text-anchor="middle" stroke="#f2f2f2" stroke-width="0.1">A</text>
<text x="122.8" y="168.24" font-family="Liberation Sans, Arial, sans-serif" font-size="10.1" font-weight="normal" font-style="normal" fill="#f2f2f2" text-anchor="middle" stroke="#f2f2f2" stroke-width="0.1">B</text>
<text x="181.2" y="168.24" font-family="Liberation Sans, Arial, sans-serif" font-size="10.1" font-weight="normal" font-style="normal" fill="#f2f2f2" text-anchor="middle" stroke="#f2f2f2" stroke-width="0.1">C</text>
<text x="240.4" y="168.24" font-family="Liberation Sans, Arial, sans-serif" font-size="10.1" font-weight="normal" font-style="normal" fill="#f2f2f2" text-anchor="middle" stroke="#f2f2f2" stroke-width="0.1">D</text>
<text x="291.2" y="168.24" font-family="Liberation Sans, Arial, sans-serif" font-size="10.1" font-weight="normal" font-style="normal" fill="#f2f2f2" text-anchor="middle" stroke="#f2f2f2" stroke-width="0.1">E</text>
<text x="337.6" y="168.24" font-family="Liberation Sans, Arial, sans-serif" font-size="10.1" font-weight="normal" font-style="normal" fill="#f2f2f2" text-anchor="middle" stroke="#f2f2f2" stroke-width="0.1">F</text>
<text x="384" y="168.24" font-family="Liberation Sans, Arial, sans-serif" font-size="10.1" font-weight="normal" font-style="normal" fill="#f2f2f2" text-anchor="middle" stroke="#f2f2f2" stroke-width="0.1">G</text>
<text x="430.4" y="168.24" font-family="Liberation Sans, Arial, sans-serif" font-size="10.1" font-weight="normal" font-style="normal" fill="#f2f2f2" text-anchor="middle" stroke="#f2f2f2" stroke-width="0.1">H</text>
<text x="476.8" y="168.24" font-family="Liberation Sans, Arial, sans-serif" font-size="10.1" font-weight="normal" font-style="normal" fill="#f2f2f2" text-anchor="middle" stroke="#f2f2f2" stroke-width="0.1">I</text>
<text x="523.2" y="168.24" font-family="Liberation Sans, Arial, sans-serif" font-size="10.1" font-weight="normal" font-style="normal" fill="#f2f2f2" text-anchor="middle" stroke="#f2f2f2" stroke-width="0.1">J</text>
<text x="569.6" y="168.24" font-family="Liberation Sans, Arial, sans-serif" font-size="10.1" font-weight="normal" font-style="normal" fill="#f2f2f2" text-anchor="middle" stroke="#f2f2f2" stroke-width="0.1">K</text>
<text x="616" y="168.24" font-family="Liberation Sans, Arial, sans-serif" font-size="10.1" font-weight="normal" font-style="normal" fill="#f2f2f2" text-anchor="middle" stroke="#f2f2f2" stroke-width="0.1">L</text>
<text x="662.4" y="168.24" font-family="Liberation Sans, Arial, sans-serif" font-size="10.1" font-weight="normal" font-style="normal" fill="#f2f2f2" text-anchor="middle" stroke="#f2f2f2" stroke-width="0.1">M</text>
<text x="36.55" y="183.49" font-family="Liberation Sans, Arial, sans-serif" font-size="10.4" font-weight="normal" font-style="normal" fill="#f2f2f2" textLength="5.5" lengthAdjust="spacingAndGlyphs" stroke="#f2f2f2" stroke-width="0.1">1</text>
<text x="36.55" y="198.49" font-family="Liberation Sans, Arial, sans-serif" font-size="10.4" font-weight="normal" font-style="normal" fill="#f2f2f2" textLength="5.5" lengthAdjust="spacingAndGlyphs" stroke="#f2f2f2" stroke-width="0.1">2</text>
<text x="36.55" y="213.59" font-family="Liberation Sans, Arial, sans-serif" font-size="10.4" font-weight="normal" font-style="normal" fill="#f2f2f2" textLength="5.5" lengthAdjust="spacingAndGlyphs" stroke="#f2f2f2" stroke-width="0.1">3</text>
<text x="36.55" y="228.64" font-family="Liberation Sans, Arial, sans-serif" font-size="10.4" font-weight="normal" font-style="normal" fill="#f2f2f2" textLength="5.5" lengthAdjust="spacingAndGlyphs" stroke="#f2f2f2" stroke-width="0.1">4</text>
<text x="36.55" y="243.69" font-family="Liberation Sans, Arial, sans-serif" font-size="10.4" font-weight="normal" font-style="normal" fill="#f2f2f2" textLength="5.5" lengthAdjust="spacingAndGlyphs" stroke="#f2f2f2" stroke-width="0.1">5</text>
<text x="36.55" y="258.74" font-family="Liberation Sans, Arial, sans-serif" font-size="10.4" font-weight="normal" font-style="normal" fill="#f2f2f2" textLength="5.5" lengthAdjust="spacingAndGlyphs" stroke="#f2f2f2" stroke-width="0.1">6</text>
<text x="36.55" y="273.2" font-family="Liberation Sans, Arial, sans-serif" font-size="10.4" font-weight="normal" font-style="normal" fill="#f2f2f2" textLength="5.5" lengthAdjust="spacingAndGlyphs" stroke="#f2f2f2" stroke-width="0.1">7</text>
<text x="36.55" y="287.12" font-family="Liberation Sans, Arial, sans-serif" font-size="10.4" font-weight="normal" font-style="normal" fill="#f2f2f2" textLength="5.5" lengthAdjust="spacingAndGlyphs" stroke="#f2f2f2" stroke-width="0.1">8</text>
<text x="36.55" y="301.04" font-family="Liberation Sans, Arial, sans-serif" font-size="10.4" font-weight="normal" font-style="normal" fill="#f2f2f2" textLength="5.5" lengthAdjust="spacingAndGlyphs" stroke="#f2f2f2" stroke-width="0.1">9</text>
<text x="33.8" y="314.96" font-family="Liberation Sans, Arial, sans-serif" font-size="10.4" font-weight="normal" font-style="normal" fill="#f2f2f2" textLength="11" lengthAdjust="spacingAndGlyphs" stroke="#f2f2f2" stroke-width="0.1">10</text>
<text x="33.8" y="328.88" font-family="Liberation Sans, Arial, sans-serif" font-size="10.4" font-weight="normal" font-style="normal" fill="#f2f2f2" textLength="11" lengthAdjust="spacingAndGlyphs" stroke="#f2f2f2" stroke-width="0.1">11</text>
<text x="33.8" y="342.8" font-family="Liberation Sans, Arial, sans-serif" font-size="10.4" font-weight="normal" font-style="normal" fill="#f2f2f2" textLength="11" lengthAdjust="spacingAndGlyphs" stroke="#f2f2f2" stroke-width="0.1">12</text>
<text x="33.8" y="356.72" font-family="Liberation Sans, Arial, sans-serif" font-size="10.4" font-weight="normal" font-style="normal" fill="#f2f2f2" textLength="11" lengthAdjust="spacingAndGlyphs" stroke="#f2f2f2" stroke-width="0.1">13</text>
<text x="33.8" y="370.64" font-family="Liberation Sans, Arial, sans-serif" font-size="10.4" font-weight="normal" font-style="normal" fill="#f2f2f2" textLength="11" lengthAdjust="spacingAndGlyphs" stroke="#f2f2f2" stroke-width="0.1">14</text>
<text x="33.8" y="384.56" font-family="Liberation Sans, Arial, sans-serif" font-size="10.4" font-weight="normal" font-style="normal" fill="#f2f2f2" textLength="11" lengthAdjust="spacingAndGlyphs" stroke="#f2f2f2" stroke-width="0.1">15</text>
<clipPath id="c16"><rect x="29" y="380" width="20" height="13"/></clipPath><g clip-path="url(#c16)">
<text x="33.8" y="398.24" font-family="Liberation Sans, Arial, sans-serif" font-size="10.4" font-weight="normal" font-style="normal" fill="#f2f2f2" textLength="11" lengthAdjust="spacingAndGlyphs" stroke="#f2f2f2" stroke-width="0.1">16</text>
</g>
<line x1="95.3" y1="171.4" x2="95.3" y2="262.2" stroke="#444444" stroke-width="0.9"/>
<line x1="150.6" y1="171.4" x2="150.6" y2="262.2" stroke="#444444" stroke-width="0.9"/>
<line x1="212.2" y1="171.4" x2="212.2" y2="262.2" stroke="#444444" stroke-width="0.9"/>
<line x1="268" y1="171.4" x2="268" y2="262.2" stroke="#444444" stroke-width="0.9"/>
<line x1="94.8" y1="171.6" x2="268.5" y2="171.6" stroke="#444444" stroke-width="0.9"/>
<line x1="94.8" y1="186.4" x2="268.5" y2="186.4" stroke="#444444" stroke-width="0.9"/>
<line x1="94.8" y1="201.5" x2="268.5" y2="201.5" stroke="#444444" stroke-width="0.9"/>
<line x1="94.8" y1="216.6" x2="268.5" y2="216.6" stroke="#444444" stroke-width="0.9"/>
<line x1="94.8" y1="231.6" x2="268.5" y2="231.6" stroke="#444444" stroke-width="0.9"/>
<line x1="94.8" y1="246.7" x2="268.5" y2="246.7" stroke="#444444" stroke-width="0.9"/>
<line x1="94.8" y1="261.7" x2="268.5" y2="261.7" stroke="#444444" stroke-width="0.9"/>
<text x="101.2" y="183.2" font-family="Liberation Serif, Times New Roman, serif" font-size="11.4" font-weight="bold" font-style="normal" fill="#0a0a0a" textLength="43.8" lengthAdjust="spacingAndGlyphs" stroke="#0a0a0a" stroke-width="0.1">Column I</text>
<text x="157.8" y="183.2" font-family="Liberation Serif, Times New Roman, serif" font-size="11.4" font-weight="bold" font-style="normal" fill="#0a0a0a" textLength="47.8" lengthAdjust="spacingAndGlyphs" stroke="#0a0a0a" stroke-width="0.1">Column II</text>
<text x="218.4" y="183.2" font-family="Liberation Serif, Times New Roman, serif" font-size="11.4" font-weight="bold" font-style="normal" fill="#0a0a0a" textLength="40.4" lengthAdjust="spacingAndGlyphs" stroke="#0a0a0a" stroke-width="0.1">Multiply</text>
<text x="122.8" y="198.95" font-family="Liberation Serif, Times New Roman, serif" font-size="11.6" font-weight="normal" font-style="normal" fill="#0a0a0a" text-anchor="middle" stroke="#0a0a0a" stroke-width="0.2">2</text>
<text x="181.4" y="198.95" font-family="Liberation Serif, Times New Roman, serif" font-size="11.6" font-weight="normal" font-style="normal" fill="#0a0a0a" text-anchor="middle" stroke="#0a0a0a" stroke-width="0.2">1</text>
<text x="122.8" y="214.05" font-family="Liberation Serif, Times New Roman, serif" font-size="11.6" font-weight="normal" font-style="normal" fill="#0a0a0a" text-anchor="middle" stroke="#0a0a0a" stroke-width="0.2">2</text>
<text x="181.4" y="214.05" font-family="Liberation Serif, Times New Roman, serif" font-size="11.6" font-weight="normal" font-style="normal" fill="#0a0a0a" text-anchor="middle" stroke="#0a0a0a" stroke-width="0.2">2</text>
<text x="122.8" y="229.1" font-family="Liberation Serif, Times New Roman, serif" font-size="11.6" font-weight="normal" font-style="normal" fill="#0a0a0a" text-anchor="middle" stroke="#0a0a0a" stroke-width="0.2">2</text>
<text x="181.4" y="229.1" font-family="Liberation Serif, Times New Roman, serif" font-size="11.6" font-weight="normal" font-style="normal" fill="#0a0a0a" text-anchor="middle" stroke="#0a0a0a" stroke-width="0.2">3</text>
<text x="122.8" y="244.15" font-family="Liberation Serif, Times New Roman, serif" font-size="11.6" font-weight="normal" font-style="normal" fill="#0a0a0a" text-anchor="middle" stroke="#0a0a0a" stroke-width="0.2">2</text>
<text x="181.4" y="244.15" font-family="Liberation Serif, Times New Roman, serif" font-size="11.6" font-weight="normal" font-style="normal" fill="#0a0a0a" text-anchor="middle" stroke="#0a0a0a" stroke-width="0.2">4</text>
<text x="122.8" y="259.2" font-family="Liberation Serif, Times New Roman, serif" font-size="11.6" font-weight="normal" font-style="normal" fill="#0a0a0a" text-anchor="middle" stroke="#0a0a0a" stroke-width="0.2">2</text>
<text x="181.4" y="259.2" font-family="Liberation Serif, Times New Roman, serif" font-size="11.6" font-weight="normal" font-style="normal" fill="#0a0a0a" text-anchor="middle" stroke="#0a0a0a" stroke-width="0.2">5</text>
<text x="240.6" y="198.95" font-family="Liberation Serif, Times New Roman, serif" font-size="11.6" font-weight="normal" font-style="normal" fill="#0a0a0a" text-anchor="middle" stroke="#0a0a0a" stroke-width="0.2">2</text>
<rect x="212.2" y="201.5" width="55.8" height="15.2" fill="none" stroke="#2a7a4b" stroke-width="1.5"/>
<rect x="266.7" y="215.5" width="2.7" height="2.7" fill="#1f6e40"/>
<rect x="699.4" y="158.6" width="12.2" height="234.4" fill="#3f3f3f" rx="5"/>
<path d="M706 161.6 l3.2 4 h-6.4 z" fill="#d0d0d0" />
<rect x="703" y="170.4" width="6.2" height="164.2" fill="#c6c6c6" rx="3"/>
<path d="M706 391 l3.2 -4 h-6.4 z" fill="#d0d0d0" />
<rect x="29.4" y="393" width="683.6" height="23" fill="#2b2b2b"/>
<path d="M51.6 400.6 l-3 3.6 l3 3.6" fill="none" stroke="#9a9a9a" stroke-width="1.3" stroke-linecap="round" stroke-linejoin="round"/>
<path d="M72.4 400.6 l3 3.6 l-3 3.6" fill="none" stroke="#9a9a9a" stroke-width="1.3" stroke-linecap="round" stroke-linejoin="round"/>
<path d="M108 393 h48 v0 c-2 0 -3 1 -3 3 v14 c0 2 -1 3 -3 3 h-36 c-2 0 -3 -1 -3 -3 v-14 c0 -2 -1 -3 -3 -3 z" fill="#ffffff" />
<text x="117.6" y="406.02" font-family="Liberation Sans, Arial, sans-serif" font-size="10.6" font-weight="bold" font-style="normal" fill="#222222" textLength="29.2" lengthAdjust="spacingAndGlyphs">Sheet1</text>
<rect x="117.4" y="410" width="29.4" height="1.7" fill="#2f9a5c" rx="0.6"/>
<line x1="156.6" y1="398" x2="156.6" y2="410.4" stroke="#5c5c5c" stroke-width="1"/>
<path d="M186.8 403.9 h8 M190.8 399.9 v8" fill="none" stroke="#e8e8e8" stroke-width="1.2" />
<rect x="441.2" y="400.9" width="1.6" height="1.6" fill="#f0f0f0"/>
<rect x="441.2" y="403.8" width="1.6" height="1.6" fill="#f0f0f0"/>
<rect x="441.2" y="406.7" width="1.6" height="1.6" fill="#f0f0f0"/>
<rect x="453.8" y="398.6" width="246" height="11.2" fill="#3f3f3f" rx="5.6"/>
<path d="M457 404.2 l4 -3 v6 z" fill="#d8d8d8" />
<rect x="465.4" y="400.8" width="206.2" height="6.8" fill="#c6c6c6" rx="3.4"/>
<path d="M696 404.2 l-4 -3 v6 z" fill="#d8d8d8" />
<rect x="1.4" y="416" width="711.6" height="15.6" fill="#333333"/>
<text x="7.6" y="427.7" font-family="Liberation Sans, Arial, sans-serif" font-size="8.6" font-weight="normal" font-style="normal" fill="#f2f2f2" textLength="20" lengthAdjust="spacingAndGlyphs" stroke="#f2f2f2" stroke-width="0.1">Ready</text>
<text x="39.6" y="427.7" font-family="Liberation Sans, Arial, sans-serif" font-size="8.6" font-weight="normal" font-style="normal" fill="#f2f2f2" textLength="40.4" lengthAdjust="spacingAndGlyphs" stroke="#f2f2f2" stroke-width="0.1">Sheet 1 of 1</text>
<text x="91.2" y="427.7" font-family="Liberation Sans, Arial, sans-serif" font-size="8.6" font-weight="normal" font-style="normal" fill="#f2f2f2" textLength="66.4" lengthAdjust="spacingAndGlyphs" stroke="#f2f2f2" stroke-width="0.1">Workbook Statistics</text>
<rect x="172.4" y="419.6" width="10" height="8.8" fill="none" rx="0.8" stroke="#e8e8e8" stroke-width="1"/>
<rect x="172.4" y="419.6" width="10" height="2.8" fill="#e8e8e8" rx="0.6"/>
<circle cx="179.6" cy="426.4" r="3" fill="#333" stroke="#e8e8e8" stroke-width="1"/>
<circle cx="179.6" cy="426.4" r="1.2" fill="#e8e8e8"/>
<circle cx="199.6" cy="420.6" r="1.4" fill="none" stroke="#ececec" stroke-width="1"/>
<path d="M195.4 423 q4.2 1.4 8.4 0 M199.6 423.6 v2.4 l-2.4 3.6 M199.6 426 l1.4 1.6" fill="none" stroke="#ececec" stroke-width="1.1" stroke-linecap="round" stroke-linejoin="round"/>
<path d="M201.2 428 l1.6 1.6 l3 -3.6" fill="none" stroke="#ececec" stroke-width="1.1" stroke-linecap="round" stroke-linejoin="round"/>
<text x="207.6" y="427.7" font-family="Liberation Sans, Arial, sans-serif" font-size="8.6" font-weight="normal" font-style="normal" fill="#f2f2f2" textLength="83.9" lengthAdjust="spacingAndGlyphs" stroke="#f2f2f2" stroke-width="0.1">Accessibility: Good to go</text>
<rect x="521.2" y="416.4" width="27.8" height="15" fill="#4a4a4a"/>
<rect x="529.3" y="419.4" width="9.3" height="9" fill="none" stroke="#f0f0f0" stroke-width="1.1"/>
<line x1="532.4" y1="419.4" x2="532.4" y2="428.4" stroke="#f0f0f0" stroke-width="0.9"/>
<line x1="535.5" y1="419.4" x2="535.5" y2="428.4" stroke="#f0f0f0" stroke-width="0.9"/>
<line x1="529.3" y1="422.4" x2="538.6" y2="422.4" stroke="#f0f0f0" stroke-width="0.9"/>
<line x1="529.3" y1="425.4" x2="538.6" y2="425.4" stroke="#f0f0f0" stroke-width="0.9"/>
<rect x="558.8" y="419.4" width="9.4" height="9" fill="none" stroke="#e4e4e4" stroke-width="1.1"/>
<rect x="561.2" y="421.6" width="4.6" height="4.8" fill="none" stroke="#e4e4e4" stroke-width="0.9"/>
<rect x="587.6" y="419.4" width="10.2" height="9" fill="none" stroke="#e4e4e4" stroke-width="1.1"/>
<path d="M591 419.4 v5 h4.4 v-5" fill="none" stroke="#e4e4e4" stroke-width="1" />
<line x1="610.6" y1="424.4" x2="615" y2="424.4" stroke="#d0d0d0" stroke-width="1"/>
<line x1="620" y1="424.4" x2="692.4" y2="424.4" stroke="#a8a8a8" stroke-width="0.9"/>
<rect x="655.2" y="420.2" width="2.6" height="8.4" fill="#d8d8d8" rx="0.6"/>
<path d="M696.4 424.4 h5 M698.9 421.9 v5" fill="none" stroke="#d0d0d0" stroke-width="1" />
</svg>
</body></html>
